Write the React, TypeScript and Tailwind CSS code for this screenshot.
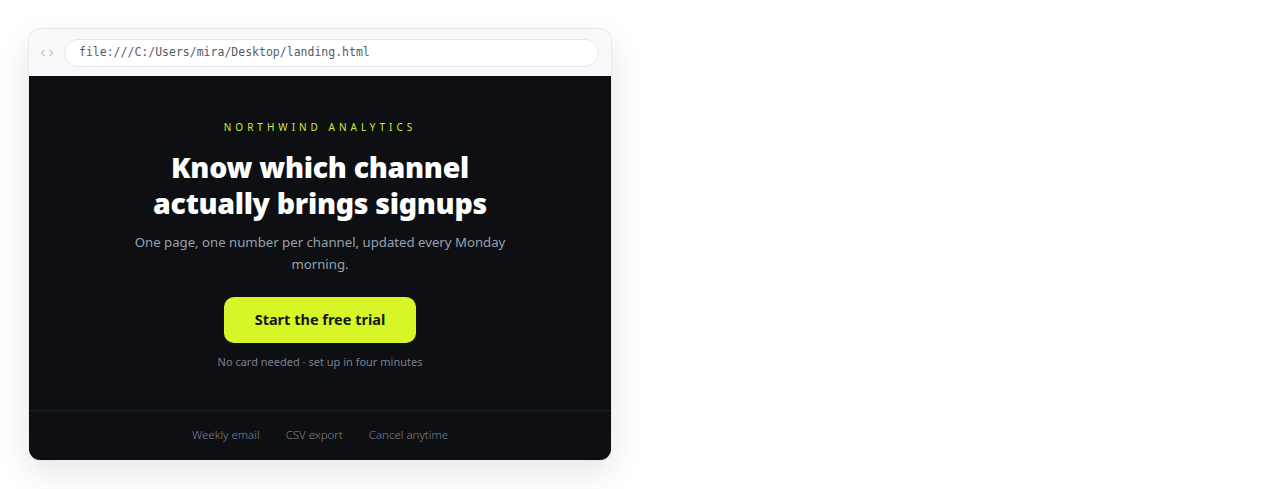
const FOOTER_LINKS = ["Weekly email", "CSV export", "Cancel anytime"];

function NavArrows() {
  return (
    <svg width="16" height="10" viewBox="0 0 16 10" fill="none" stroke="#c3c7cc" strokeWidth="1.2" strokeLinecap="round" strokeLinejoin="round">
      <path d="M5 2.5 2.5 5 5 7.5" />
      <path d="M11 2.5 13.5 5 11 7.5" />
    </svg>
  );
}

export default function App() {
  return (
    <div className="min-h-screen bg-white p-7 font-['Noto_Sans',sans-serif]">
      <div className="w-[584px] overflow-hidden rounded-[12px] border border-[#e7e9ec] bg-[#f8f9fa] shadow-[0_12px_32px_rgba(15,23,42,0.10)]">
        {/* browser chrome */}
        <div className="flex h-[47px] items-center gap-[9px] pl-[10px] pr-3">
          <NavArrows />
          <div className="flex h-[28px] flex-1 items-center rounded-full border border-[#e5e7eb] bg-white px-[14px] font-['DejaVu_Sans_Mono',monospace] text-[11.5px] text-[#555b63]">
            file:///C:/Users/mira/Desktop/landing.html
          </div>
        </div>

        {/* page */}
        <div className="bg-[#0d0f13]">
          <div className="flex flex-col items-center px-8 pb-[39px] pt-[44px] text-center">
            <div className="text-[10px] uppercase tracking-[0.4em] text-[#cdea3c]">
              Northwind Analytics
            </div>
            <h1 className="mt-[14px] text-[28.5px] font-black leading-[36px] tracking-[-0.01em] text-white">
              Know which channel
              <br />
              actually brings signups
            </h1>
            <p className="mt-[10px] max-w-[380px] text-[13.2px] leading-[22px] text-[#9aa1ab]">
              One page, one number per channel, updated every Monday morning.
            </p>
            <button className="mt-[22px] h-[46px] w-[192px] rounded-[10px] bg-[#d8f527] text-[14.5px] font-bold text-[#14170c]">
              Start the free trial
            </button>
            <div className="mt-[11px] text-[11px] text-[#7b828c]">
              No card needed · set up in four minutes
            </div>
          </div>
          <div className="flex h-[50px] items-center justify-center gap-[26px] border-t border-[#1c1f25] text-[11.5px] font-light text-[#7d8490]">
            {FOOTER_LINKS.map((l) => (
              <span key={l}>{l}</span>
            ))}
          </div>
        </div>
      </div>
    </div>
  );
}
